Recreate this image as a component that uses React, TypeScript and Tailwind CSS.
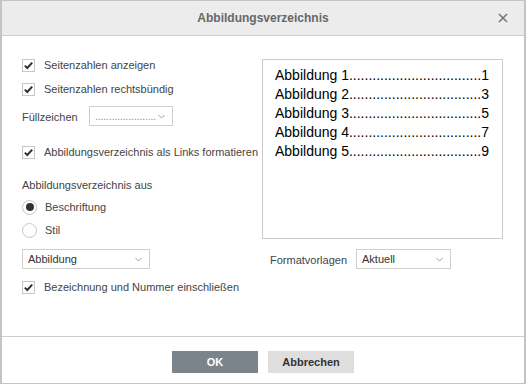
import React from "react";

const font = { fontFamily: '"Liberation Sans", Arial, sans-serif' };

const Check = ({ label }: { label: string }) => (
  <label className="flex items-center h-[18px] text-[11px] text-[#444]">
    <span className="w-[13px] h-[13px] border border-[#c6c6c6] bg-white flex items-center justify-center shrink-0">
      <svg width="11" height="11" viewBox="0 0 11 11">
        <polyline points="1.8,5.6 4.3,8 9.2,2.6" fill="none" stroke="#333" strokeWidth="2" />
      </svg>
    </span>
    <span className="ml-[9px] whitespace-nowrap">{label}</span>
  </label>
);

const Radio = ({ label, checked }: { label: string; checked?: boolean }) => (
  <label className="flex items-center h-[18px] text-[11px] text-[#444]">
    <span className="w-[15px] h-[15px] rounded-full border border-[#c6c6c6] bg-white flex items-center justify-center shrink-0">
      {checked && <span className="w-[8px] h-[8px] rounded-full bg-[#333]" />}
    </span>
    <span className="ml-[8px]">{label}</span>
  </label>
);

const Chevron = () => (
  <svg width="7" height="5" viewBox="0 0 7 5" className="shrink-0">
    <polyline points="0.5,1 3.5,4 6.5,1" fill="none" stroke="#a0a0a0" strokeWidth="1" />
  </svg>
);

const Select = ({ value, className, muted }: { value: string; className: string; muted?: boolean }) => (
  <div className={`h-[20px] border border-[#cfcfcf] bg-white flex items-center pl-[5px] pr-[7px] ${className}`}>
    <span className={`flex-1 whitespace-nowrap ${muted ? "text-[10px] text-[#8a8a8a]" : "text-[11px] text-[#333]"}`}>
      {value}
    </span>
    <Chevron />
  </div>
);

const entries = [
  ["Abbildung 1", "1"],
  ["Abbildung 2", "3"],
  ["Abbildung 3", "5"],
  ["Abbildung 4", "7"],
  ["Abbildung 5", "9"],
];

const leader = ".".repeat(34);

export default function App() {
  return (
    <div className="w-[526px] h-[386px] bg-white" style={font}>
      <div className="w-[526px] h-[384px] border-x-2 border-y border-[#c4c4c4] flex flex-col">
        {/* Header */}
        <div className="h-[35px] shrink-0 bg-[#ececec] border-b border-[#cdcdcd] flex items-center relative">
          <span className="flex-1 text-center text-[12px] font-bold text-[#676767]">Abbildungsverzeichnis</span>
          <svg width="10" height="10" viewBox="0 0 10 10" className="absolute right-[16px] top-[12px]">
            <path d="M1 1 L9 9 M9 1 L1 9" stroke="#767676" strokeWidth="1.6" />
          </svg>
        </div>

        {/* Body */}
        <div className="h-[300px] shrink-0 flex pl-[20px]">
          <div className="w-[240px] flex flex-col">
            <div className="mt-[20px]">
              <Check label="Seitenzahlen anzeigen" />
            </div>
            <div className="mt-[6px]">
              <Check label="Seitenzahlen rechtsbündig" />
            </div>
            <div className="mt-[8px] flex items-center">
              <span className="w-[67px] text-[11px] text-[#444] mt-[3px]">Füllzeichen</span>
              <Select value={".".repeat(22)} className="w-[84px]" muted />
            </div>
            <div className="mt-[17px]">
              <Check label="Abbildungsverzeichnis als Links formatieren" />
            </div>
            <div className="mt-[15px] h-[18px] flex items-center text-[11px] text-[#444]">
              Abbildungsverzeichnis aus
            </div>
            <div className="mt-[4px]">
              <Radio label="Beschriftung" checked />
            </div>
            <div className="mt-[5px]">
              <Radio label="Stil" />
            </div>
            <div className="mt-[10px]">
              <Select value="Abbildung" className="w-[128px]" />
            </div>
            <div className="mt-[9px]">
              <Check label="Bezeichnung und Nummer einschließen" />
            </div>
          </div>

          <div className="w-[241px] flex flex-col">
            <div className="mt-[23px] h-[180px] border border-[#cbcbcb] pl-[12px] pr-[14px] pt-[6px]">
              {entries.map(([name, page]) => (
                <div key={name} className="flex h-[19px] items-center text-[14px] text-black leading-[19px] whitespace-nowrap">
                  <span>{name}</span>
                  <span className="flex-1">{leader}</span>
                  <span>{page}</span>
                </div>
              ))}
            </div>
            <div className="mt-[10px] flex items-center pl-[8px]">
              <span className="w-[86px] text-[11px] text-[#444] mt-[2px]">Formatvorlagen</span>
              <Select value="Aktuell" className="w-[95px]" />
            </div>
          </div>
        </div>

        {/* Footer */}
        <div className="flex-1 border-t border-[#cdcdcd] flex justify-center pt-[14px] gap-[10px]">
          <button className="w-[86px] h-[22px] bg-[#7c848b] text-white text-[11px] font-bold">OK</button>
          <button className="w-[86px] h-[22px] bg-[#dedede] text-[#333] text-[11px] font-bold">Abbrechen</button>
        </div>
      </div>
    </div>
  );
}
